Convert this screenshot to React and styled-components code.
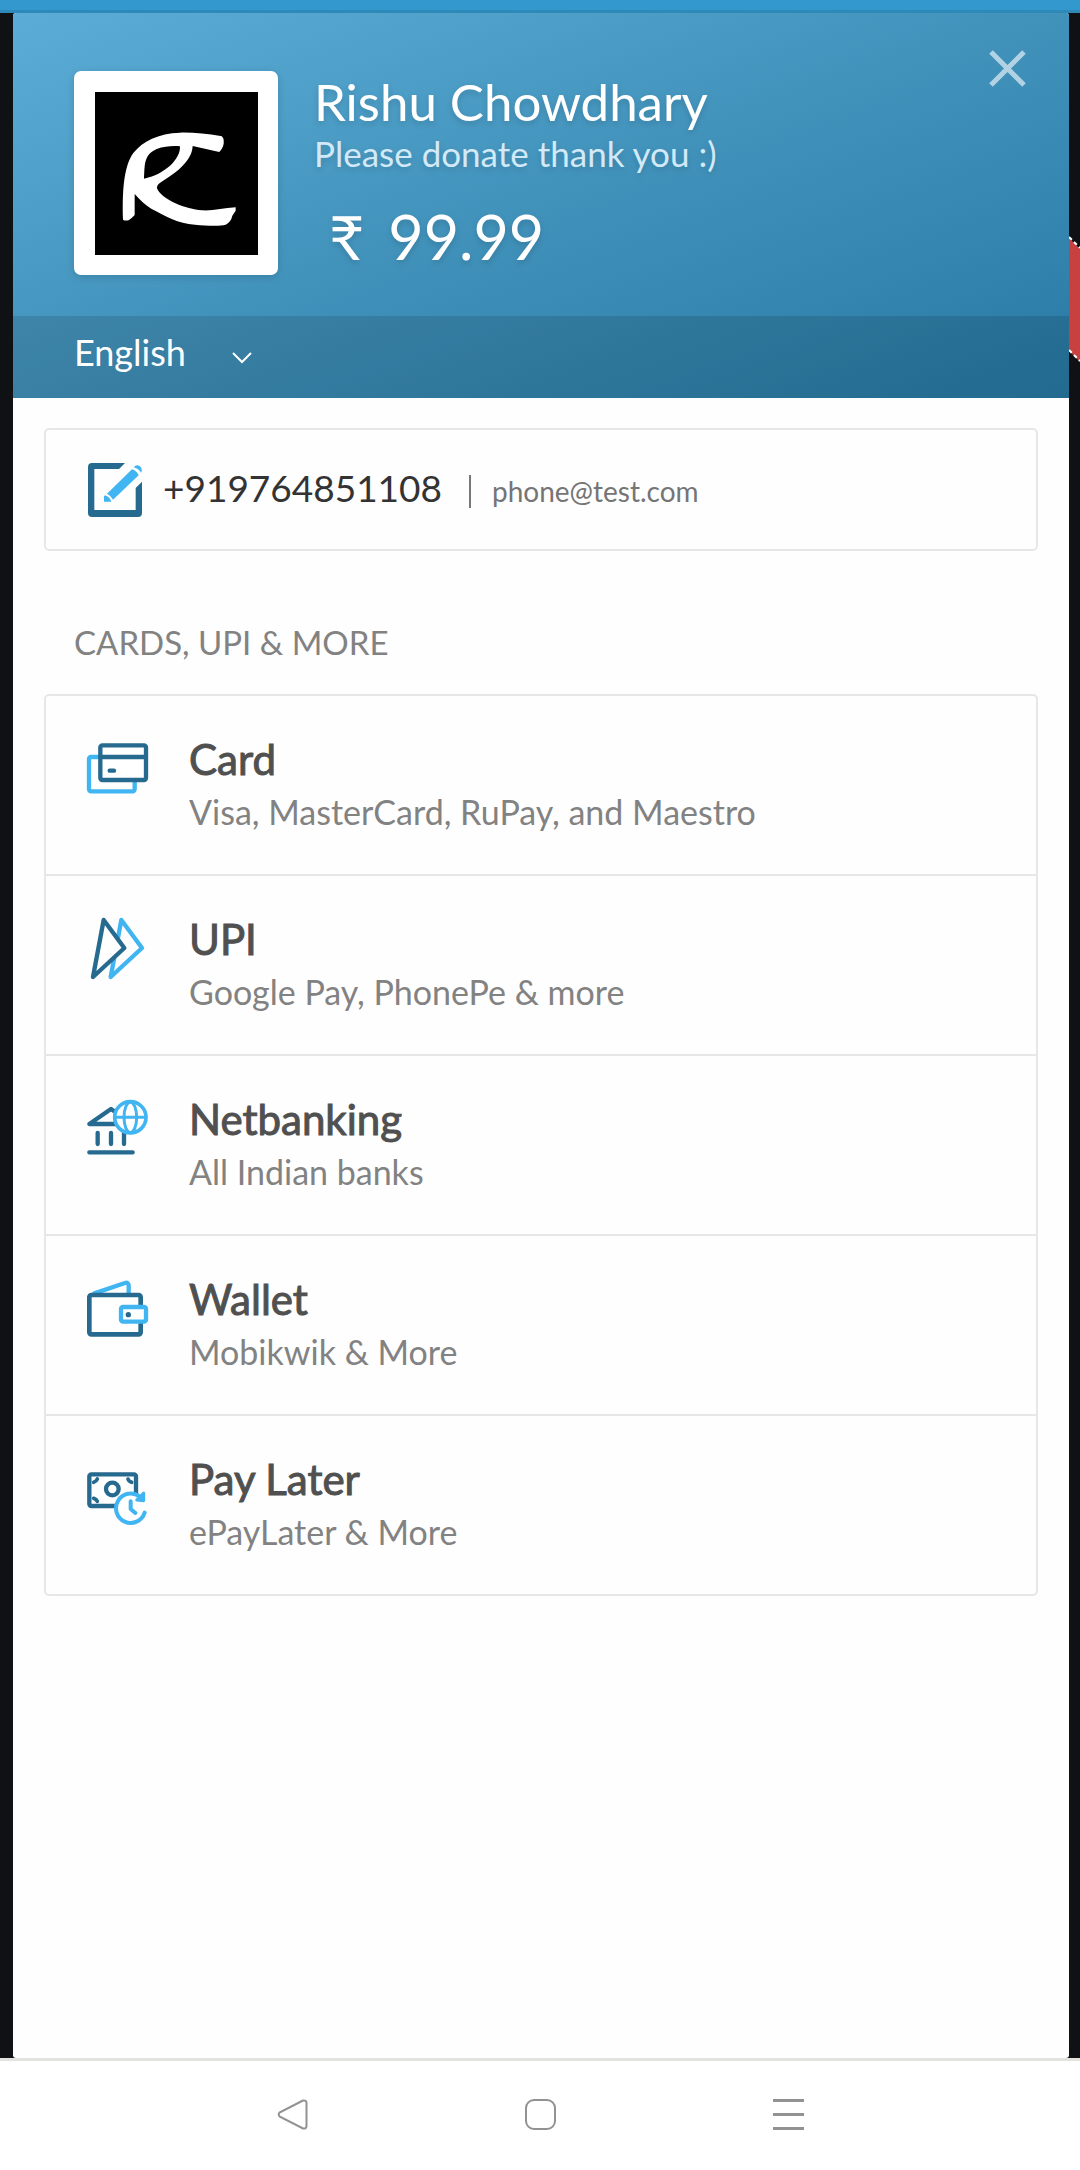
import React from "react";
import styled, { createGlobalStyle } from "styled-components";

const DARK = "#276a8f";
const LIGHT = "#41b5f2";

const GlobalStyle = createGlobalStyle`
  *, *::before, *::after { box-sizing: border-box; }
  body { margin: 0; background: #101114; }
  body, button, select { font-family: Lato, "Liberation Sans", sans-serif; }
  button { border: 0; padding: 0; background: none; text-align: left; cursor: pointer; }
  svg { display: block; flex: none; }
`;

const Page = styled.div`
  position: relative;
  display: flex;
  flex-direction: column;
  min-height: 100vh;
`;

const StatusStrip = styled.div`
  height: 13px;
  background: #3398ce;
  border-bottom: 3px solid #2d89b8;
`;

const Ribbon = styled.svg`
  position: absolute;
  top: 236px;
  right: 0;
`;

const Stage = styled.div`
  flex: 1;
  display: flex;
  padding: 0 11px 0 13px;
`;

const Modal = styled.main`
  flex: 1;
  min-width: 0;
  background: #fefefe;
  border-radius: 3px;
  overflow: hidden;
`;

const Header = styled.header`
  position: relative;
  color: #fff;
  background: linear-gradient(to bottom right, #5badd7, #4192bb 50%, #2879a4);
`;

const Merchant = styled.div`
  display: flex;
  gap: 36px;
  padding: 58px 61px 41px;
`;

const LogoFrame = styled.div`
  flex: none;
  width: 204px;
  height: 204px;
  padding: 21px 20px 20px 21px;
  background: #fff;
  border-radius: 7px;
  box-shadow: 0 2px 8px rgba(0, 0, 0, 0.15);
`;

const MerchantText = styled.div`
  text-shadow: 0 3px 6px rgba(0, 0, 0, 0.15);
`;

const MerchantName = styled.h1`
  margin: 0;
  font-size: 51px;
  line-height: 62px;
  font-weight: 400;
`;

const Description = styled.p`
  margin: 0;
  font-size: 35px;
  line-height: 40px;
  color: #d2e9f8;
`;

const Amount = styled.p`
  display: flex;
  gap: 24px;
  margin: 28px 0 0;
  padding-left: 15px;
  font-size: 61px;
  line-height: 72px;
`;

const CloseButton = styled.button`
  position: absolute;
  top: 37px;
  right: 43px;
  color: rgba(255, 255, 255, 0.6);
`;

const LanguageBar = styled.div`
  padding: 0 61px;
  height: 82px;
  display: flex;
  align-items: center;
  background: rgba(0, 0, 0, 0.12);
`;

const LanguageField = styled.label`
  position: relative;
  display: flex;
  align-items: center;
  height: 44px;
  margin-bottom: 10px;
`;

const LanguageSelect = styled.select`
  appearance: none;
  width: 180px;
  height: 44px;
  padding: 0;
  border: 0;
  background: transparent;
  color: #fff;
  font-size: 36px;
  line-height: 44px;
`;

const Chevron = styled.svg`
  position: absolute;
  right: 2px;
  bottom: 10px;
  pointer-events: none;
`;

const Body = styled.div`
  padding: 30px 31px;
`;

const ContactCard = styled.button`
  display: flex;
  gap: 21px;
  width: 100%;
  padding: 33px 42px 32px;
  border: 2px solid #e6e8e8;
  border-radius: 5px;
`;

const ContactText = styled.span`
  display: flex;
  align-items: baseline;
  gap: 27px;
`;

const Phone = styled.span`
  font-size: 37px;
  line-height: 50px;
  color: #333;
`;

const Email = styled.span`
  padding-left: 21px;
  border-left: 2px solid #777;
  font-size: 28px;
  line-height: 33px;
  color: #757575;
`;

const SectionTitle = styled.h2`
  margin: 69px 30px 30px;
  font-size: 33px;
  line-height: 44px;
  font-weight: 400;
  color: #828282;
`;

const MethodList = styled.ul`
  margin: 0;
  padding: 0;
  list-style: none;
  border: 2px solid #e6e7e7;
  border-radius: 5px;
`;

const MethodItem = styled.li`
  & + & { border-top: 2px solid #e6e7e7; }
`;

const MethodButton = styled.button`
  display: flex;
  align-items: flex-start;
  gap: 41px;
  width: 100%;
  padding: 38px 41px 40px;
`;

const MethodIcon = styled.svg`
  width: 61px;
  height: 61px;
  margin-top: 4px;
  overflow: visible;
  fill: #fff;
  stroke-width: 13px;
  stroke-linecap: round;
  stroke-linejoin: round;
`;

const MethodText = styled.span`
  display: grid;
  gap: 6px;
`;

const MethodName = styled.span`
  font-size: 42px;
  line-height: 50px;
  color: #505050;
  -webkit-text-stroke: 1px #505050;
`;

const MethodNote = styled.span`
  font-size: 34px;
  line-height: 44px;
  color: #828282;
`;

const NavBar = styled.nav`
  display: flex;
  justify-content: center;
  align-items: center;
  gap: 217px;
  height: 112px;
  padding-bottom: 2px;
  background: #fff;
  border-top: 3px solid #e2e3df;
`;

const NavIcon = styled.svg`
  width: 31px;
  height: 31px;
  fill: none;
  stroke: #929292;
  stroke-width: 2px;
`;

const Logo = () => (
  <svg width="163" height="163" viewBox="15 36 489 489" role="img" aria-label="Rishu Chowdhary logo">
    <rect x="15" y="36" width="489" height="489" fill="#000" />
    <path
      fill="#fff"
      fillRule="evenodd"
      d="M392 168C350 162 310 157 270 158C205 160 157 184 130 219C104 255 96 320 99 419Q104 423 116 421Q124 416 134 405V342C150 360 165 375 185 387C230 410 262 430 315 434C350 437 390 439 407 434Q423 426 427 407L437 392V382C400 384 370 393 335 391C290 388 215 360 201 325C200 316 205 312 215 305C265 275 306 240 308 198L388 216Q404 200 401 180Q399 169 392 168ZM162 296C165 255 160 225 200 207C225 198 250 197 270 199C272 240 220 285 162 296Z"
    />
  </svg>
);

const EditIcon = () => (
  <svg width="54" height="54" viewBox="54 69 162 162" aria-hidden="true">
    <path fill={DARK} d="M165 69H66Q54 69 54 81V219Q54 231 66 231H204Q216 231 216 219V125L197 144V210H73V87H147Z" />
    <g fill={LIGHT}>
      <path d="M186 88Q200 92 206 106L129 179Q122 166 111 161Z" />
      <path d="M191 82Q200 71 210 79Q219 88 213 98Q204 85 191 82Z" />
      <path d="M105 166Q119 170 124 185H102V169Z" />
    </g>
  </svg>
);

const CardIcon = () => (
  <MethodIcon viewBox="0 0 183 183" aria-hidden="true">
    <g strokeWidth="13">
      <rect x="6" y="57" width="137" height="103" rx="6" stroke={LIGHT} />
      <rect x="40" y="22" width="137" height="104" rx="6" stroke={DARK} />
      <path d="M40 57H177M68 98H81" stroke={DARK} />
    </g>
  </MethodIcon>
);

const UpiIcon = () => (
  <MethodIcon viewBox="0 0 183 183" aria-hidden="true">
    <path d="M103 6L165 90L71 177Z" stroke={LIGHT} />
    <path d="M50 6L112 90L18 177Z" stroke={DARK} />
  </MethodIcon>
);

const NetbankingIcon = () => (
  <MethodIcon viewBox="0 0 183 183" aria-hidden="true">
    <path d="M7 78L72 33L137 78ZM32 105V138M72 105V138M111 105V138M7 163H137" stroke={DARK} />
    <circle cx="130" cy="58" r="47" stroke={LIGHT} strokeWidth="11" />
    <g stroke={LIGHT} strokeWidth="9" fill="none">
      <ellipse cx="130" cy="58" rx="19" ry="46" />
      <path d="M84 58H176" />
    </g>
  </MethodIcon>
);

const WalletIcon = () => (
  <MethodIcon viewBox="0 0 183 183" aria-hidden="true">
    <path d="M22 46L114 15Q125 12 125 23V46" stroke={LIGHT} />
    <rect x="7" y="51" width="154" height="118" rx="6" stroke={DARK} strokeWidth="14" />
    <rect x="102" y="87" width="75" height="44" rx="6" stroke={LIGHT} />
    <circle cx="124" cy="110" r="8" fill={DARK} />
  </MethodIcon>
);

const PayLaterIcon = () => (
  <MethodIcon viewBox="0 0 183 183" aria-hidden="true">
    <rect x="7" y="49" width="140" height="95" rx="6" stroke={DARK} />
    <circle cx="76" cy="93" r="19" stroke={DARK} />
    <path d="M20 73Q28 70 31 63M134 73Q125 70 123 63M20 121Q28 124 31 130" fill="none" stroke={DARK} strokeWidth="11" />
    <circle cx="131" cy="151" r="44" />
    <path d="M158 116A44 44 0 1 0 173 164M131 130V153L145 165" fill="none" stroke={LIGHT} strokeWidth="12" />
    <path d="M149 126L170 128V105Z" fill={LIGHT} stroke={LIGHT} strokeWidth="9" />
  </MethodIcon>
);

const methods = [
  { name: "Card", note: "Visa, MasterCard, RuPay, and Maestro", Icon: CardIcon },
  { name: "UPI", note: "Google Pay, PhonePe & more", Icon: UpiIcon },
  { name: "Netbanking", note: "All Indian banks", Icon: NetbankingIcon },
  { name: "Wallet", note: "Mobikwik & More", Icon: WalletIcon },
  { name: "Pay Later", note: "ePayLater & More", Icon: PayLaterIcon },
];

export default function App() {
  return (
    <>
      <GlobalStyle />
      <Page>
        <StatusStrip />
        <Ribbon width="11" height="128" viewBox="0 0 11 128" aria-hidden="true">
          <path d="M0 2L11 13V126L0 115Z" fill="#c94040" />
          <path d="M0 1L11 12M0 114L11 125" stroke="#fff" strokeWidth="2" strokeDasharray="4 3" />
        </Ribbon>
        <Stage>
          <Modal>
            <Header>
              <Merchant>
                <LogoFrame>
                  <Logo />
                </LogoFrame>
                <MerchantText>
                  <MerchantName>Rishu Chowdhary</MerchantName>
                  <Description>Please donate thank you :)</Description>
                  <Amount>
                    <span>₹</span>
                    <span>99.99</span>
                  </Amount>
                </MerchantText>
              </Merchant>
              <LanguageBar>
                <LanguageField>
                  <LanguageSelect aria-label="Language" defaultValue="en">
                    <option value="en">English</option>
                  </LanguageSelect>
                  <Chevron width="20" height="12" viewBox="0 0 20 12" aria-hidden="true">
                    <path d="M1 1L10 10L19 1" fill="none" stroke="#fff" strokeWidth="2" />
                  </Chevron>
                </LanguageField>
              </LanguageBar>
              <CloseButton aria-label="Close">
                <svg width="37" height="37" viewBox="0 0 37 37" aria-hidden="true">
                  <path d="M2 2L35 35M35 2L2 35" stroke="currentColor" strokeWidth="5" />
                </svg>
              </CloseButton>
            </Header>
            <Body>
              <ContactCard aria-label="Edit contact details">
                <EditIcon />
                <ContactText>
                  <Phone>+919764851108</Phone>
                  <Email>phone@test.com</Email>
                </ContactText>
              </ContactCard>
              <SectionTitle>CARDS, UPI &amp; MORE</SectionTitle>
              <MethodList>
                {methods.map(({ name, note, Icon }) => (
                  <MethodItem key={name}>
                    <MethodButton>
                      <Icon />
                      <MethodText>
                        <MethodName>{name}</MethodName>
                        <MethodNote>{note}</MethodNote>
                      </MethodText>
                    </MethodButton>
                  </MethodItem>
                ))}
              </MethodList>
            </Body>
          </Modal>
        </Stage>
        <NavBar aria-label="System">
          <button aria-label="Back">
            <NavIcon viewBox="0 0 31 31">
              <path d="M26 1.5L2.5 13.5Q1 15.5 2.5 17.5L26 29.5Q29.5 30 29.5 27V4Q29.5 1 26 1.5Z" />
            </NavIcon>
          </button>
          <button aria-label="Home">
            <NavIcon viewBox="0 0 31 31">
              <rect x="1" y="1" width="29" height="29" rx="8" />
            </NavIcon>
          </button>
          <button aria-label="Recent apps">
            <NavIcon viewBox="0 0 31 31">
              <path d="M0 1.5H31M0 15.5H31M0 29.5H31" strokeWidth="3" />
            </NavIcon>
          </button>
        </NavBar>
      </Page>
    </>
  );
}
